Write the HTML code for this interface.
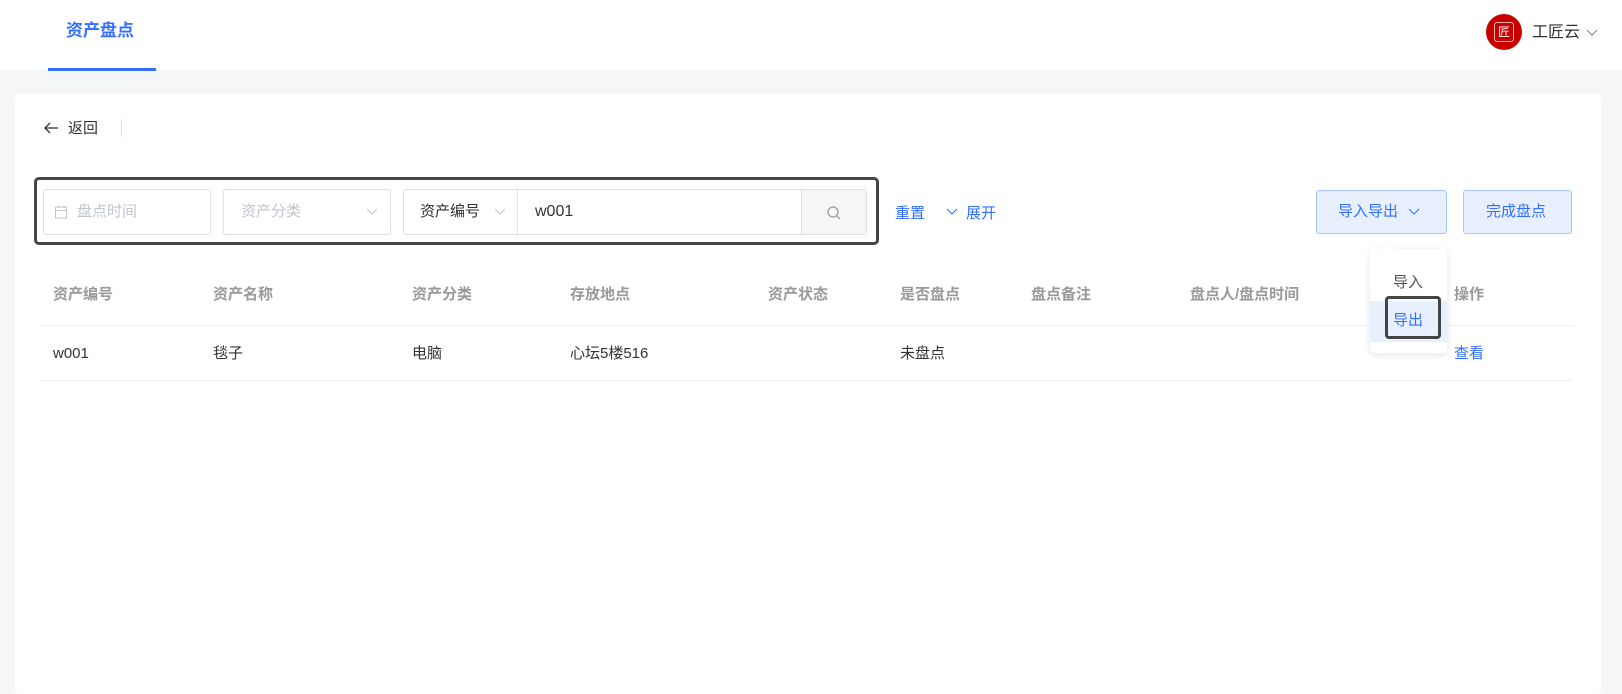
<!DOCTYPE html>
<html><head><meta charset="utf-8"><style>
*{box-sizing:border-box;margin:0;padding:0}
body{width:1622px;height:676px;background:#f5f6f8;font-family:"Liberation Sans","Noto Sans CJK SC",sans-serif;font-size:14px;color:#333;position:relative;overflow:hidden}
.a{position:absolute;line-height:22px}
.hdr{left:0;top:0;width:1622px;height:70px;background:#fff}
.card{left:15px;top:94px;width:1586px;height:600px;background:#fff;border-radius:4px}
.inp{border:1px solid #dcdfe6;border-radius:3px;height:46px;background:#fff}
.ph{color:#c0c4cc;font-size:15px}
.th{color:#999;font-weight:bold;font-size:15px;top:284px}
.td{font-size:15px;top:343px;color:#333}
</style></head><body>
<div class="a hdr"></div>
<div class="a" style="left:66px;top:20px;font-size:17px;font-weight:bold;color:#3370ff">资产盘点</div>
<div class="a" style="left:48px;top:68px;width:108px;height:3px;background:#3370ff"></div>
<div class="a" style="left:1486px;top:14px;width:36px;height:36px;border-radius:50%;background:#c90000"></div>
<div class="a" style="left:1494px;top:22px;width:20px;height:20px;border:1px solid #f3b3b3;border-radius:3px;color:#fff;font-size:12px;text-align:center;line-height:18px">匠</div>
<div class="a" style="left:1532px;top:22px;font-size:16px;color:#333">工匠云</div>
<svg class="a" style="left:1586px;top:29px" width="12" height="8"><path d="M1 1l5 5 5-5" fill="none" stroke="#888" stroke-width="1.2"/></svg>
<div class="a card"></div>
<svg class="a" style="left:43px;top:121px" width="16" height="14"><path d="M15 7H2M7 2L2 7l5 5" fill="none" stroke="#333" stroke-width="1.3"/></svg>
<div class="a" style="left:68px;top:118px;font-size:15px">返回</div>
<div class="a" style="left:121px;top:119px;width:1px;height:18px;background:#dcdfe6"></div>

<div class="a" style="left:34px;top:177px;width:845px;height:68px;border:3px solid #444;border-radius:5px"></div>
<div class="a inp" style="left:43px;top:189px;width:168px"></div>
<svg class="a" style="left:54px;top:205px" width="14" height="14"><rect x="1.5" y="2" width="11" height="11" fill="none" stroke="#c0c4cc"/><path d="M1.5 5.5h11M4 1v2M10 1v2" stroke="#c0c4cc"/></svg>
<div class="a ph" style="left:77px;top:201px">盘点时间</div>
<div class="a inp" style="left:223px;top:189px;width:168px"></div>
<div class="a ph" style="left:241px;top:201px">资产分类</div>
<svg class="a" style="left:366px;top:208px" width="12" height="8"><path d="M1 1l5 5 5-5" fill="none" stroke="#c0c4cc" stroke-width="1.1"/></svg>
<div class="a inp" style="left:403px;top:189px;width:464px"></div>
<div class="a" style="left:517px;top:190px;width:1px;height:44px;background:#dcdfe6"></div>
<div class="a" style="left:801px;top:190px;width:65px;height:44px;background:#f5f6f8;border-left:1px solid #dcdfe6"></div>
<div class="a" style="left:420px;top:201px;font-size:15px;color:#333">资产编号</div>
<svg class="a" style="left:494px;top:208px" width="12" height="8"><path d="M1 1l5 5 5-5" fill="none" stroke="#c0c4cc" stroke-width="1.1"/></svg>
<div class="a" style="left:535px;top:201px;font-size:16px;color:#333">w001</div>
<svg class="a" style="left:826px;top:205px" width="16" height="16"><circle cx="7" cy="7" r="5" fill="none" stroke="#999" stroke-width="1.2"/><path d="M11 11l3 3" stroke="#999" stroke-width="1.2"/></svg>
<div class="a" style="left:895px;top:203px;font-size:15px;color:#3370ff">重置</div>
<svg class="a" style="left:946px;top:208px" width="12" height="8"><path d="M1 1l5 5 5-5" fill="none" stroke="#3370ff" stroke-width="1.1"/></svg>
<div class="a" style="left:966px;top:203px;font-size:15px;color:#3370ff">展开</div>

<div class="a" style="left:1316px;top:190px;width:131px;height:44px;background:#e8f0ff;border:1px solid #a8c4ff;border-radius:3px"></div>
<div class="a" style="left:1338px;top:201px;font-size:15px;color:#3370ff">导入导出</div>
<svg class="a" style="left:1408px;top:208px" width="12" height="8"><path d="M1 1l5 5 5-5" fill="none" stroke="#3370ff" stroke-width="1.1"/></svg>
<div class="a" style="left:1463px;top:190px;width:109px;height:44px;background:#e8f0ff;border:1px solid #a8c4ff;border-radius:3px"></div>
<div class="a" style="left:1486px;top:201px;font-size:15px;color:#3370ff">完成盘点</div>

<div class="a th" style="left:53px">资产编号</div>
<div class="a th" style="left:213px">资产名称</div>
<div class="a th" style="left:412px">资产分类</div>
<div class="a th" style="left:570px">存放地点</div>
<div class="a th" style="left:768px">资产状态</div>
<div class="a th" style="left:900px">是否盘点</div>
<div class="a th" style="left:1031px">盘点备注</div>
<div class="a th" style="left:1190px">盘点人/盘点时间</div>
<div class="a th" style="left:1454px">操作</div>
<div class="a" style="left:41px;top:325px;width:1532px;height:1px;background:#eef0f3"></div>
<div class="a td" style="left:53px">w001</div>
<div class="a td" style="left:213px">毯子</div>
<div class="a td" style="left:412px">电脑</div>
<div class="a td" style="left:570px">心坛5楼516</div>
<div class="a td" style="left:900px">未盘点</div>
<div class="a td" style="left:1454px;color:#3370ff">查看</div>
<div class="a" style="left:41px;top:380px;width:1532px;height:1px;background:#eef0f3"></div>

<div class="a" style="left:1370px;top:249px;width:77px;height:104px;background:#fff;border-radius:4px;box-shadow:0 2px 8px rgba(0,0,0,.1)"></div>
<div class="a" style="left:1382px;top:244px;width:10px;height:10px;background:#fff;transform:rotate(45deg);box-shadow:-1px -1px 2px rgba(0,0,0,.05)"></div>
<div class="a" style="left:1393px;top:272px;font-size:15px;color:#555">导入</div>
<div class="a" style="left:1370px;top:301px;width:77px;height:41px;background:#e8f0ff"></div>
<div class="a" style="left:1393px;top:310px;font-size:15px;color:#3370ff">导出</div>
<div class="a" style="left:1385px;top:296px;width:56px;height:43px;border:3px solid #444;border-radius:4px"></div>
</body></html>
